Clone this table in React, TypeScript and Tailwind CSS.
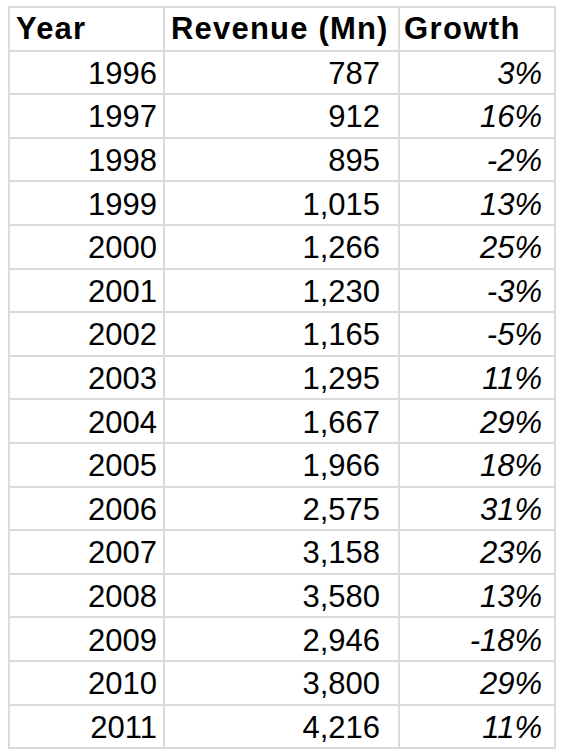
import { Fragment } from "react";

const rows: [string, string, string][] = [
  ["1996", "787", "3%"],
  ["1997", "912", "16%"],
  ["1998", "895", "-2%"],
  ["1999", "1,015", "13%"],
  ["2000", "1,266", "25%"],
  ["2001", "1,230", "-3%"],
  ["2002", "1,165", "-5%"],
  ["2003", "1,295", "11%"],
  ["2004", "1,667", "29%"],
  ["2005", "1,966", "18%"],
  ["2006", "2,575", "31%"],
  ["2007", "3,158", "23%"],
  ["2008", "3,580", "13%"],
  ["2009", "2,946", "-18%"],
  ["2010", "3,800", "29%"],
  ["2011", "4,216", "11%"],
];

const cell = "h-[43.6px] border-r-2 border-b-2 border-[#dadada] flex items-center";

export default function App() {
  return (
    <div className="w-[568px] h-[754px] bg-white pt-[6px] pl-[8px] text-black font-['Liberation_Sans',Arial,sans-serif] text-[31px] leading-none">
      <div className="w-[548px] border-l-2 border-t-2 border-[#dadada] grid grid-cols-[155px_235px_156px]">
        {/* header */}
        <div className={`${cell} pl-[6px] font-bold tracking-[1.2px]`}>Year</div>
        <div className={`${cell} pl-[6px] font-bold tracking-[1.2px]`}>Revenue (Mn)</div>
        <div className={`${cell} pl-[4px] font-bold tracking-[1.4px]`}>Growth</div>

        {rows.map(([year, revenue, growth]) => (
          <Fragment key={year}>
            <div className={`${cell} justify-end pr-[6px] pt-[2px]`}>{year}</div>
            <div className={`${cell} justify-end pr-[18px] pt-[2px]`}>{revenue}</div>
            <div className={`${cell} justify-end pr-[12px] pt-[2px] italic`}>{growth}</div>
          </Fragment>
        ))}
      </div>
    </div>
  );
}
